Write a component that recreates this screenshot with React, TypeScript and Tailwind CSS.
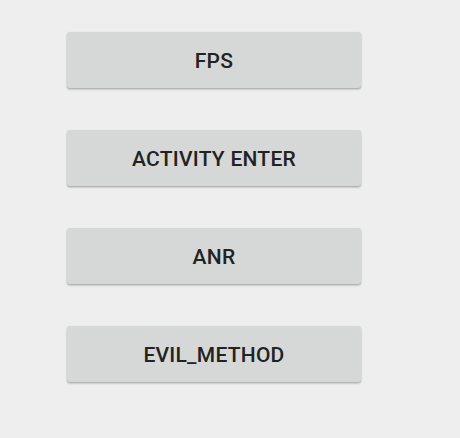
const labels = ['FPS', 'ACTIVITY ENTER', 'ANR', 'EVIL_METHOD']

export default function App() {
  return (
    <div className="h-[438px] w-[460px] bg-[#eeeeee] pl-[67px] pt-[32px] font-['Roboto',sans-serif]">
      <div className="flex w-[294px] flex-col gap-[42px]">
        {labels.map((label) => (
          <button
            key={label}
            className="flex h-[56px] items-center justify-center rounded-[3px] bg-[#d6d7d7] pt-[3px] text-[21px] font-medium tracking-[0.25px] text-[#222222] shadow-[0_1px_2px_rgba(0,0,0,0.25),0_2px_2px_rgba(0,0,0,0.08)]"
          >
            {label}
          </button>
        ))}
      </div>
    </div>
  )
}
